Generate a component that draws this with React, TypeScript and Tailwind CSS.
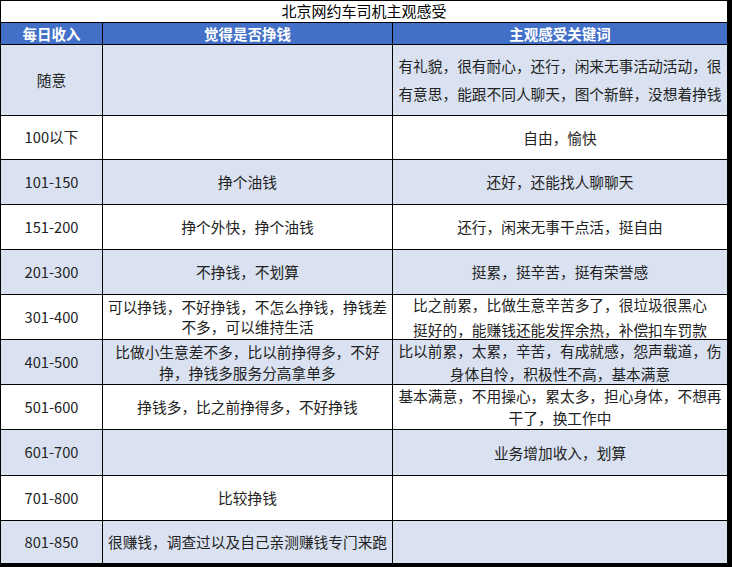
type Row = {
    income: string;
    earn: string[];
    feel: string[];
    earnLeading?: string;
    feelLeading?: string;
};

const rows: Row[] = [
    {
        income: '随意',
        earn: [],
        feel: ['有礼貌，很有耐心，还行，闲来无事活动活动，很', '有意思，能跟不同人聊天，图个新鲜，没想着挣钱'],
        feelLeading: 'leading-[28px]',
    },
    { income: '100以下', earn: [], feel: ['自由，愉快'] },
    { income: '101-150', earn: ['挣个油钱'], feel: ['还好，还能找人聊聊天'] },
    { income: '151-200', earn: ['挣个外快，挣个油钱'], feel: ['还行，闲来无事干点活，挺自由'] },
    { income: '201-300', earn: ['不挣钱，不划算'], feel: ['挺累，挺辛苦，挺有荣誉感'] },
    {
        income: '301-400',
        earn: ['可以挣钱，不好挣钱，不怎么挣钱，挣钱差', '不多，可以维持生活'],
        feel: ['比之前累，比做生意辛苦多了，很垃圾很黑心', '挺好的，能赚钱还能发挥余热，补偿扣车罚款'],
        earnLeading: 'leading-[20px]',
        feelLeading: 'leading-[25px]',
    },
    {
        income: '401-500',
        earn: ['比做小生意差不多，比以前挣得多，不好', '挣，挣钱多服务分高拿单多'],
        feel: ['比以前累，太累，辛苦，有成就感，怨声载道，伤', '身体自怜，积极性不高，基本满意'],
        earnLeading: 'leading-[21px]',
        feelLeading: 'leading-[23px]',
    },
    {
        income: '501-600',
        earn: ['挣钱多，比之前挣得多，不好挣钱'],
        feel: ['基本满意，不用操心，累太多，担心身体，不想再', '干了，换工作中'],
        feelLeading: 'leading-[22px]',
    },
    { income: '601-700', earn: [], feel: ['业务增加收入，划算'] },
    { income: '701-800', earn: ['比较挣钱'], feel: [] },
    { income: '801-850', earn: ['很赚钱，调查过以及自己亲测赚钱专门来跑'], feel: [] },
];

function Cell({ lines, leading, bg }: { lines: string[]; leading?: string; bg: string }) {
    return (
        <div className={`flex min-h-0 flex-col items-center justify-center px-1 text-center ${bg} ${leading ?? 'leading-[22px]'}`}>
            {lines.map((line) => (
                <span key={line} className="whitespace-nowrap">
                    {line}
                </span>
            ))}
        </div>
    );
}

export default function App() {
    return (
        <div
            className="grid h-[567px] w-[732px] grid-cols-[101px_289px_334px] grid-rows-[21px_21px_70px_43px_44px_44px_44px_44px_44px_44px_45px_44px_42px] gap-px overflow-hidden bg-black pb-[4px] pl-px pr-[5px] pt-px text-[14.7px] text-[#222]"
            style={{ fontFamily: '"Noto Sans CJK SC", "Noto Sans", sans-serif' }}
        >
            <div className="col-span-3 flex items-center justify-center bg-white text-[15px] text-black">北京网约车司机主观感受</div>

            <div className="flex items-center justify-center bg-[#4270c8] text-[14.5px] font-bold text-white">每日收入</div>
            <div className="flex items-center justify-center bg-[#4270c8] text-[14.5px] font-bold text-white">觉得是否挣钱</div>
            <div className="flex items-center justify-center bg-[#4270c8] text-[14.5px] font-bold text-white">主观感受关键词</div>

            {rows.map((row, index) => {
                const bg = index % 2 === 0 ? 'bg-[#dae2f1]' : 'bg-white';
                return (
                    <div key={row.income} className="contents">
                        <div className={`flex items-center justify-center ${bg}`}>{row.income}</div>
                        <Cell lines={row.earn} leading={row.earnLeading} bg={bg} />
                        <Cell lines={row.feel} leading={row.feelLeading} bg={bg} />
                    </div>
                );
            })}
        </div>
    );
}
